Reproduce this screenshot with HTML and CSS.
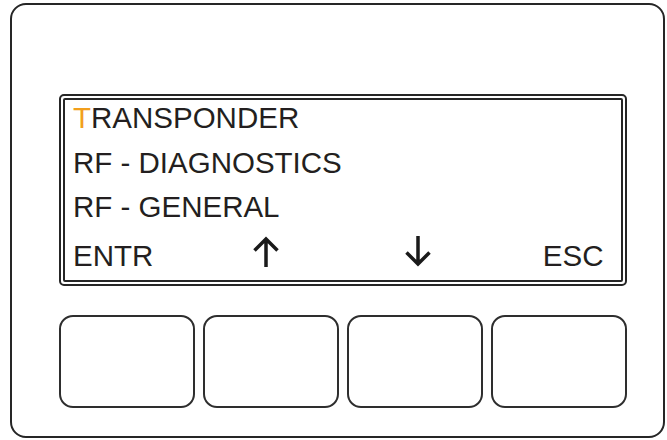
FILE: index.html
```html
<!DOCTYPE html>
<html lang="en">

<head>
    <meta charset="UTF-8">
    <meta name="viewport" content="width=device-width, initial-scale=1.0">
    <title>Transponder Panel</title>
    <link rel="stylesheet" href="styles.css">
</head>

<body>

    <div class="device">
        <div class="display">
            <div class="screen">
                <div class="menu-item"><span class="cursor">T</span>RANSPONDER</div>
                <div class="menu-item">RF - DIAGNOSTICS</div>
                <div class="menu-item">RF - GENERAL</div>

                <div class="softkeys">
                    <span class="key-label">ENTR</span>
                    <svg class="arrow" width="26" height="31" viewBox="0 0 26 31">
                        <path d="M13 31 V3 M1.5 14.5 L13 3 L24.5 14.5" />
                    </svg>
                    <span></span>
                    <svg class="arrow" width="26" height="31" viewBox="0 0 26 31">
                        <path d="M13 0 V28 M1.5 16.5 L13 28 L24.5 16.5" />
                    </svg>
                    <span class="key-label esc">ESC</span>
                </div>
            </div>
        </div>

        <div class="buttons">
            <button class="softbutton"></button>
            <button class="softbutton"></button>
            <button class="softbutton"></button>
            <button class="softbutton"></button>
        </div>
    </div>

</body>

</html>
```

FILE: styles.css
```css
/* General Reset */
* {
    margin: 0;
    padding: 0;
    box-sizing: border-box;
    font-family: "Liberation Sans", Arial, sans-serif;
}

body {
    background-color: #fff;
    color: #231f20;
}

.device {
    margin: 3px 0 0 10px;
    width: 655px;
    height: 435px;
    border: 2px solid #262626;
    border-radius: 16px;
    padding: 89px 0 0 47px;
}

.display {
    width: 568px;
    height: 192px;
    border: 2px solid #262626;
    border-radius: 5px;
    padding: 2px;
}

.screen {
    height: 100%;
    border: 2px solid #262626;
    border-radius: 2px;
    padding: 0 17.5px 0 8px;
    font-size: 29.5px;
}

.menu-item {
    height: 36px;
    line-height: 36px;
    white-space: nowrap;
}

.menu-item + .menu-item {
    margin-top: 8.5px;
}

.cursor {
    color: #f29f1d;
}

.softkeys {
    display: grid;
    grid-template-columns: 179.5px 26px 126.5px 26px 1fr;
    height: 36px;
    line-height: 36px;
    margin-top: 12.5px;
}

.arrow {
    margin-top: -2px;
    fill: none;
    stroke: #1a1a1a;
    stroke-width: 3.5;
}

.esc {
    text-align: right;
}

.buttons {
    display: flex;
    gap: 8px;
    width: 568px;
    margin-top: 29px;
}

.softbutton {
    width: 136px;
    height: 93px;
    background-color: #fff;
    border: 2px solid #2e2e2e;
    border-radius: 14px;
}
```
